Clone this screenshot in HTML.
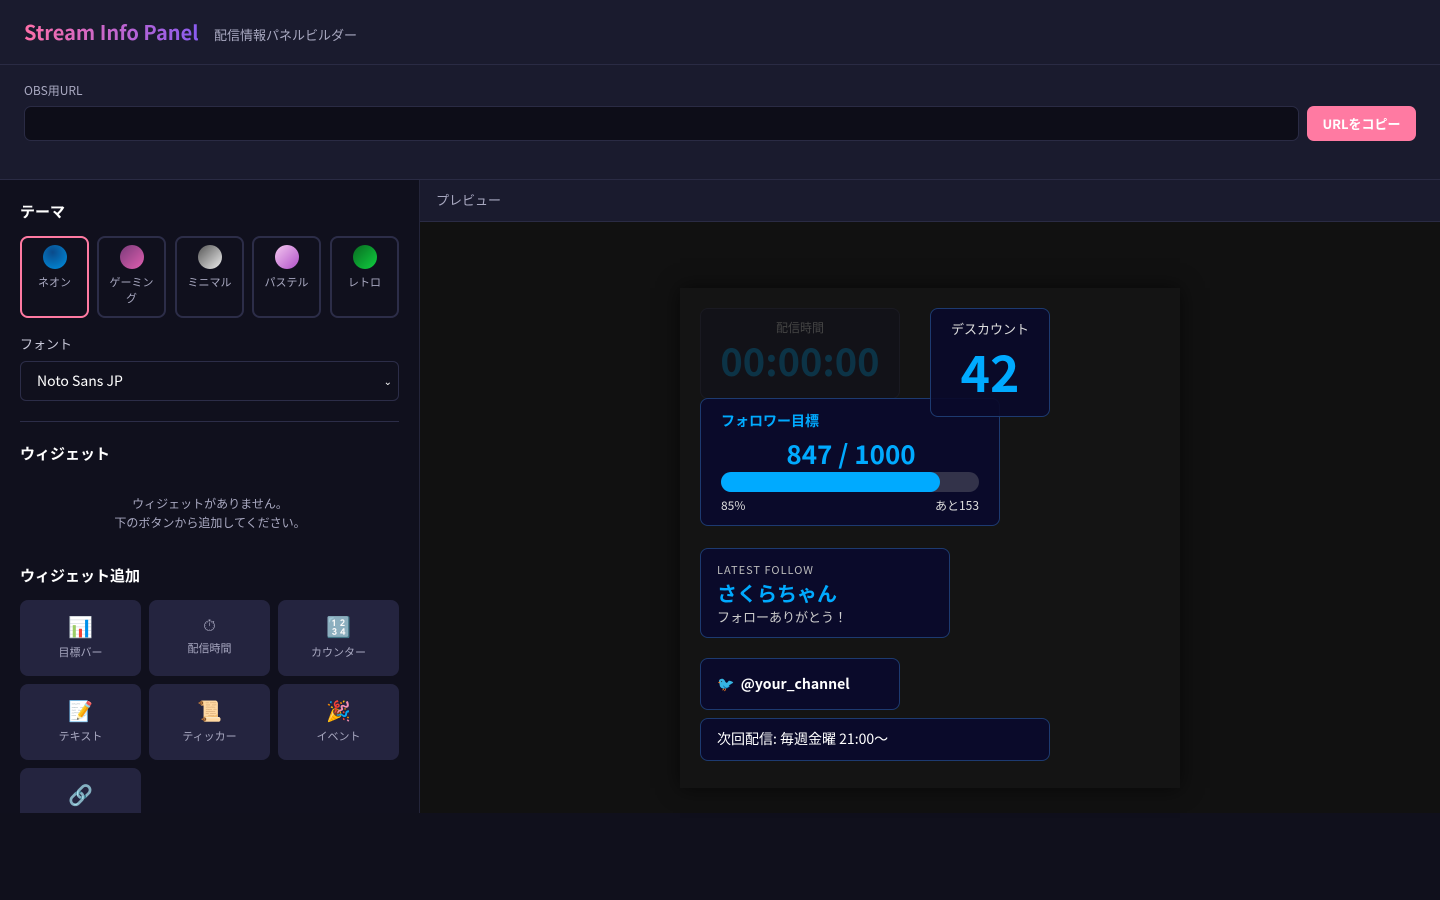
<!DOCTYPE html>
<html><head><meta charset="utf-8"><style>
*{box-sizing:border-box;margin:0;padding:0}
body{width:1440px;height:900px;background:#10101c;font-family:"Noto Sans CJK JP","Liberation Sans",sans-serif;color:#e0e0f0;position:relative;overflow:hidden}
.hdr{position:absolute;left:0;top:0;width:1440px;height:65px;background:#1a1b2e;border-bottom:1px solid #2a2b44}
.logo{position:absolute;left:24px;top:17px;font-size:20px;font-weight:bold;background:linear-gradient(90deg,#ff6fa8,#8a5cf0);-webkit-background-clip:text;color:transparent;line-height:30px}
.sub{position:absolute;left:214px;top:25px;font-size:13px;color:#a8a8c0;line-height:20px}
.urls{position:absolute;left:0;top:65px;width:1440px;height:115px;background:#1a1b2e;border-bottom:1px solid #2a2b44}
.urls .lbl{position:absolute;left:24px;top:17px;font-size:12px;color:#a8a8c0}
.urls .inp{position:absolute;left:24px;top:41px;width:1275px;height:35px;background:#0d0d18;border:1px solid #2a2b44;border-radius:7px}
.urls .btn{position:absolute;left:1307px;top:41px;width:109px;height:35px;background:#ff7aa2;border-radius:7px;color:#fff;font-weight:bold;font-size:13px;text-align:center;line-height:35px}
.side{position:absolute;left:0;top:180px;width:420px;height:633px;background:#10101d;border-right:1px solid #24253a;overflow:hidden}
h3{position:absolute;left:20px;font-size:15px;font-weight:bold;color:#fff;line-height:22px}
.th{position:absolute;top:56px;width:69px;height:82px;border:2px solid #2c2d48;border-radius:8px;text-align:center;font-size:11px;color:#a8a8c0;line-height:16px}
.th .b{width:24px;height:24px;border-radius:50%;margin:7px auto 5px}
.sel{position:absolute;left:20px;top:181px;width:379px;height:40px;border:1px solid #2c2d48;border-radius:6px;background:#10101d;font-size:14px;color:#fff;padding:9px 16px;line-height:20px}
.w{position:absolute;width:121px;height:76px;background:#24243f;border-radius:8px;text-align:center;font-size:11px;color:#a8a8c0}
.w .i{font-size:20px;height:28px;margin-top:12px;line-height:28px;margin-bottom:4px}
.pvh{position:absolute;left:420px;top:180px;width:1020px;height:42px;background:#1a1b2e;border-bottom:1px solid #2a2b44;font-size:13px;color:#a8a8c0;padding:10px 16px}
.cv{position:absolute;left:420px;top:222px;width:1020px;height:591px;background:#111}
.stage{position:absolute;left:680px;top:288px;width:500px;height:500px;background:#141414;box-shadow:0 0 20px rgba(0,0,0,.6)}
.bx{position:absolute;background:#0a0a2a;border:1px solid #1d3a70;border-radius:8px}
.ac{color:#00aaff;font-weight:bold}
</style></head><body>
<div class="hdr"><div class="logo">Stream Info Panel</div><div class="sub">配信情報パネルビルダー</div></div>
<div class="urls"><div class="lbl">OBS用URL</div><div class="inp"></div><div class="btn">URLをコピー</div></div>
<div class="side">
<h3 style="top:21px">テーマ</h3>
<div class="th" style="left:20px;border-color:#ff7aa2"><div class="b" style="background:radial-gradient(circle at 40% 30%,#0a4a8a,#0090e0)"></div>ネオン</div>
<div class="th" style="left:97px"><div class="b" style="background:linear-gradient(135deg,#7a3a7a,#e060b0)"></div>ゲーミン<br>グ</div>
<div class="th" style="left:175px"><div class="b" style="background:linear-gradient(135deg,#555,#eee)"></div>ミニマル</div>
<div class="th" style="left:252px"><div class="b" style="background:linear-gradient(135deg,#f4c8f0,#b050c8)"></div>パステル</div>
<div class="th" style="left:330px"><div class="b" style="background:linear-gradient(135deg,#086a20,#10d040)"></div>レトロ</div>
<div style="position:absolute;left:20px;top:154px;font-size:13px;color:#c8c8d8;line-height:20px">フォント</div>
<div class="sel">Noto Sans JP<span style="position:absolute;right:6px;top:9px;font-size:10px">&#8964;</span></div>
<div style="position:absolute;left:20px;top:241px;width:379px;height:1px;background:#2c2d48"></div>
<h3 style="top:263px">ウィジェット</h3>
<div style="position:absolute;left:0;width:420px;top:314px;text-align:center;font-size:12px;line-height:19px;color:#a8a8c0">ウィジェットがありません。<br>下のボタンから追加してください。</div>
<h3 style="top:385px">ウィジェット追加</h3>
<div class="w" style="left:20px;top:420px"><div class="i">📊</div>目標バー</div>
<div class="w" style="left:149px;top:420px"><div class="i" style="font-size:16px;height:24px;line-height:24px">⏱</div>配信時間</div>
<div class="w" style="left:278px;top:420px"><div class="i">🔢</div>カウンター</div>
<div class="w" style="left:20px;top:504px"><div class="i">📝</div>テキスト</div>
<div class="w" style="left:149px;top:504px"><div class="i">📜</div>ティッカー</div>
<div class="w" style="left:278px;top:504px"><div class="i">🎉</div>イベント</div>
<div class="w" style="left:20px;top:588px"><div class="i">🔗</div></div>
</div>
<div class="pvh">プレビュー</div>
<div class="cv"></div>
<div class="stage"></div>
<div class="bx" style="left:700px;top:308px;width:200px;height:91px;background:#121218;border-color:#1a1a22;text-align:center">
<div style="font-size:12px;color:#444;margin-top:10px;line-height:18px">配信時間</div>
<div style="font-size:38px;font-weight:bold;color:#0c3346;line-height:46px">00:00:00</div></div>
<div class="bx" style="left:700px;top:398px;width:300px;height:128px">
<div class="ac" style="position:absolute;left:20px;top:12px;font-size:14px;line-height:20px">フォロワー目標</div>
<div class="ac" style="position:absolute;left:0;width:300px;text-align:center;top:38px;font-size:26px;line-height:34px">847 / 1000</div>
<div style="position:absolute;left:20px;top:73px;width:258px;height:20px;background:#33334a;border-radius:10px"><div style="width:219px;height:20px;background:#00aaff;border-radius:10px"></div></div>
<div style="position:absolute;left:20px;top:98px;font-size:12px;color:#ddd;line-height:18px">85%</div>
<div style="position:absolute;right:20px;top:98px;font-size:12px;color:#ddd;line-height:18px">あと153</div></div>
<div class="bx" style="left:930px;top:308px;width:120px;height:109px;text-align:center;background:rgba(10,10,42,.92)">
<div style="font-size:13px;color:#ddd;margin-top:10px;line-height:20px">デスカウント</div>
<div class="ac" style="font-size:50px;line-height:64px">42</div></div>
<div class="bx" style="left:700px;top:548px;width:250px;height:90px">
<div style="position:absolute;left:16px;top:12px;font-size:11px;letter-spacing:1px;color:#bbb;line-height:18px">LATEST FOLLOW</div>
<div class="ac" style="position:absolute;left:16px;top:29px;font-size:20px;line-height:30px">さくらちゃん</div>
<div style="position:absolute;left:16px;top:58px;font-size:13px;color:#ccc;line-height:20px">フォローありがとう！</div></div>
<div class="bx" style="left:700px;top:658px;width:200px;height:52px;font-size:14px;font-weight:bold;color:#fff;padding:0 16px;line-height:50px">🐦&nbsp; @your_channel</div>
<div class="bx" style="left:700px;top:718px;width:350px;height:43px;font-size:14px;color:#fff;padding:0 16px;line-height:41px">次回配信: 毎週金曜 21:00〜</div>
</body></html>
